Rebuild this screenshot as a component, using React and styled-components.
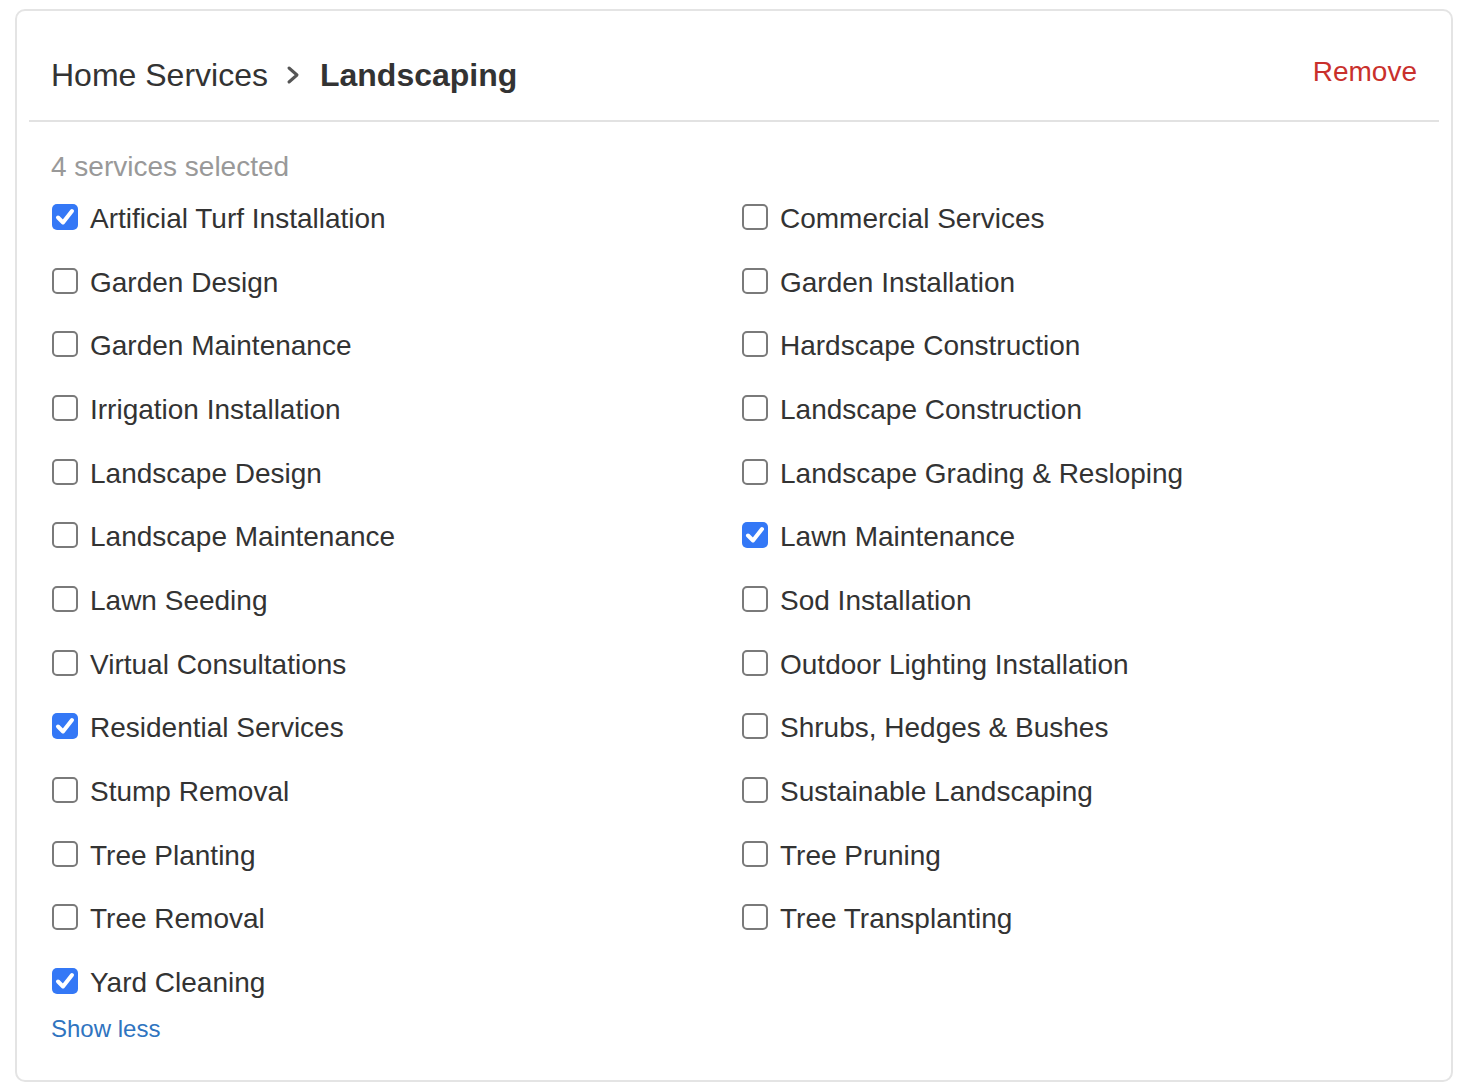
import React, { useState } from 'react'
import { styled, createGlobalStyle } from 'styled-components';

const GlobalStyle = createGlobalStyle`
  body {
    margin: 0;
    background: #fff;
    font-family: "Liberation Sans", Arial, sans-serif;
  }
`;

const Card = styled.section`
  margin: 9px 11px 0 15px;
  border: 2px solid #e4e4e4;
  border-radius: 10px;
  background: #fff;
`;

const Header = styled.header`
  display: flex;
  align-items: center;
  justify-content: space-between;
  margin: 0 12px;
  padding: 44px 22px 25px;
  border-bottom: 2px solid #e2e2e2;
`;

const Crumbs = styled.div`
  display: flex;
  align-items: center;
  font-size: 32px;
  line-height: 40px;
  color: #333;
`;

const Current = styled.span`
  font-weight: 700;
`;

const Chevron = styled.svg`
  width: 14px;
  height: 20px;
  margin: 0 20px 0 18px;
`;

const RemoveLink = styled.a`
  font-size: 28px;
  line-height: 34px;
  color: #c9302c;
  margin-bottom: 6px;
  cursor: pointer;
`;

const Body = styled.div`
  padding: 27px 34px 36px;
`;

const Count = styled.div`
  font-size: 28px;
  line-height: 36px;
  color: #999;
  margin-bottom: 14px;
`;

const Grid = styled.div`
  display: grid;
  grid-template-columns: 690px 1fr;
  grid-auto-rows: 40px;
  row-gap: 23.67px;
`;

const Item = styled.label`
  display: flex;
  align-items: center;
  gap: 12px;
  font-size: 28px;
  color: #333;
  cursor: pointer;
`;

const Box = styled.span`
  box-sizing: border-box;
  width: 26px;
  height: 26px;
  margin: 0 0 4px 1px;
  border-radius: 5px;
  border: ${(p) => (p.$checked ? 'none' : '2px solid #7a7a7a')};
  background: ${(p) => (p.$checked ? '#3478f6' : '#fff')};
  display: flex;
  align-items: center;
  justify-content: center;
  flex-shrink: 0;
`;

const ShowLess = styled.a`
  display: block;
  margin-top: 11px;
  font-size: 24px;
  line-height: 30px;
  color: #2f74c0;
  cursor: pointer;
`;

const rows = [
  ['Artificial Turf Installation', 'Commercial Services'],
  ['Garden Design', 'Garden Installation'],
  ['Garden Maintenance', 'Hardscape Construction'],
  ['Irrigation Installation', 'Landscape Construction'],
  ['Landscape Design', 'Landscape Grading & Resloping'],
  ['Landscape Maintenance', 'Lawn Maintenance'],
  ['Lawn Seeding', 'Sod Installation'],
  ['Virtual Consultations', 'Outdoor Lighting Installation'],
  ['Residential Services', 'Shrubs, Hedges & Bushes'],
  ['Stump Removal', 'Sustainable Landscaping'],
  ['Tree Planting', 'Tree Pruning'],
  ['Tree Removal', 'Tree Transplanting'],
  ['Yard Cleaning'],
];

const services = rows.flat();

const Checkbox = ({ checked }) => (
  <Box $checked={checked}>
    {checked && (
      <svg width="20" height="18" viewBox="0 0 20 18">
        <path d="M3 9.5 L8 14.5 L17 3" fill="none" stroke="#fff" strokeWidth="4" strokeLinecap="round" strokeLinejoin="round" />
      </svg>
    )}
  </Box>
);

const App = () => {
  const [selected, setSelected] = useState([
    'Artificial Turf Installation',
    'Lawn Maintenance',
    'Residential Services',
    'Yard Cleaning',
  ]);

  const toggle = (name) => {
    setSelected((s) => (s.includes(name) ? s.filter((n) => n !== name) : [...s, name]));
  };

  return (
    <>
      <GlobalStyle />
      <Card>
        <Header>
          <Crumbs>
            <span>Home Services</span>
            <Chevron viewBox="0 0 14 20">
              <polyline points="3,3 11,10 3,17" fill="none" stroke="#555" strokeWidth="3" strokeLinecap="round" strokeLinejoin="round" />
            </Chevron>
            <Current>Landscaping</Current>
          </Crumbs>
          <RemoveLink>Remove</RemoveLink>
        </Header>
        <Body>
          <Count>{selected.length} services selected</Count>
          <Grid>
            {services.map((name) => (
              <Item key={name} onClick={() => toggle(name)}>
                <Checkbox checked={selected.includes(name)} />
                <span>{name}</span>
              </Item>
            ))}
          </Grid>
          <ShowLess>Show less</ShowLess>
        </Body>
      </Card>
    </>
  )
}

export default App;
